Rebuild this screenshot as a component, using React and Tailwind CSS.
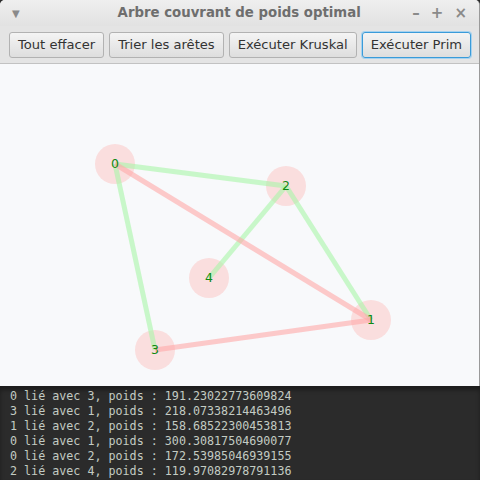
import React from 'react';

const nodes = [
  { id: 0, x: 115, y: 164 },
  { id: 1, x: 371, y: 320 },
  { id: 2, x: 286, y: 186 },
  { id: 3, x: 155, y: 350 },
  { id: 4, x: 209, y: 278 },
];

const edges = [
  { a: 0, b: 2, ok: true },
  { a: 0, b: 3, ok: true },
  { a: 2, b: 4, ok: true },
  { a: 2, b: 1, ok: true },
  { a: 0, b: 1, ok: false },
  { a: 3, b: 1, ok: false },
];

const log = [
  '0 lié avec 3, poids : 191.23022773609824',
  '3 lié avec 1, poids : 218.07338214463496',
  '1 lié avec 2, poids : 158.68522300453813',
  '0 lié avec 1, poids : 300.30817504690077',
  '0 lié avec 2, poids : 172.53985046939155',
  '2 lié avec 4, poids : 119.97082978791136',
];

const buttons = ['Tout effacer', 'Trier les arêtes', 'Exécuter Kruskal', 'Exécuter Prim'];

const App = () => {
  const pos = (id) => nodes.find((n) => n.id === id);

  return (
    <div className="w-[480px] h-[480px] bg-[#2b2b2b] flex flex-col overflow-hidden">
      {/* fenêtre */}
      <div className="h-[386px] flex flex-col rounded-t-[5px] overflow-hidden border-r border-[#9a9a9a] bg-[#e6e6e6]">
        {/* barre de titre */}
        <div className="h-[26px] flex items-center px-3 bg-gradient-to-b from-[#efefef] to-[#e2e2e2] text-[#7a7a7a]" style={{ fontFamily: '"DejaVu Sans", sans-serif' }}>
          <span className="text-[10px] w-[16px] text-[#8a8a8a]">▼</span>
          <span className="flex-1 text-center text-[13.3px] font-bold text-[#6e6e6e] pl-[38px]">Arbre couvrant de poids optimal</span>
          <div className="flex items-center gap-[11px] text-[#8a8a8a] text-[15px] font-bold">
            <span>–</span>
            <span>+</span>
            <span>×</span>
          </div>
        </div>

        {/* barre d'outils */}
        <div className="h-[38px] flex items-center gap-[5px] px-[9px] bg-[#e4e4e4] border-b border-[#c2c2c2]" style={{ fontFamily: '"DejaVu Sans", sans-serif' }}>
          {buttons.map((b, i) => (
            <button
              key={b}
              className={
                i === 3
                  ? 'shrink-0 whitespace-nowrap h-[26px] px-[8px] rounded-[3px] border border-[#3a9bd9] ring-1 ring-[#a6d2ef] bg-gradient-to-b from-[#f4f4f4] to-[#dedede] text-[13.1px] text-[#333]'
                  : 'shrink-0 whitespace-nowrap h-[26px] px-[8px] rounded-[3px] border border-[#b2b2b2] bg-gradient-to-b from-[#f4f4f4] to-[#dedede] text-[13.1px] text-[#333]'
              }
            >
              {b}
            </button>
          ))}
        </div>

        {/* zone de dessin */}
        <div className="flex-1 relative bg-[#f8f9fb]">
          <svg width="478" height="322" viewBox="0 64 478 322" className="block">
            {nodes.map((n) => (
              <circle key={'c' + n.id} cx={n.x} cy={n.y} r="20" fill="#fadede" />
            ))}
            {edges.map((e, i) => {
              const p = pos(e.a);
              const q = pos(e.b);
              return (
                <line
                  key={i}
                  x1={p.x}
                  y1={p.y}
                  x2={q.x}
                  y2={q.y}
                  stroke={e.ok ? '#a8f5a8' : '#ffa8a8'}
                  strokeOpacity="0.6"
                  strokeWidth="5"
                />
              );
            })}
            {nodes.map((n) => (
              <text
                key={'t' + n.id}
                x={n.x}
                y={n.y + 4}
                textAnchor="middle"
                fontSize="12.5"
                fill="#0f8a12"
                fontFamily="DejaVu Sans, sans-serif"
              >
                {n.id}
              </text>
            ))}
          </svg>
        </div>
      </div>

      {/* console */}
      <div className="flex-1 pt-[3px] pl-[10px] text-[11.7px] leading-[15px] text-[#c3cbc3] shadow-[inset_0_4px_4px_rgba(0,0,0,0.35)]" style={{ fontFamily: '"DejaVu Sans Mono", monospace' }}>
        {log.map((l) => (
          <div key={l} className="whitespace-pre">{l}</div>
        ))}
      </div>
    </div>
  );
};

export default App;
